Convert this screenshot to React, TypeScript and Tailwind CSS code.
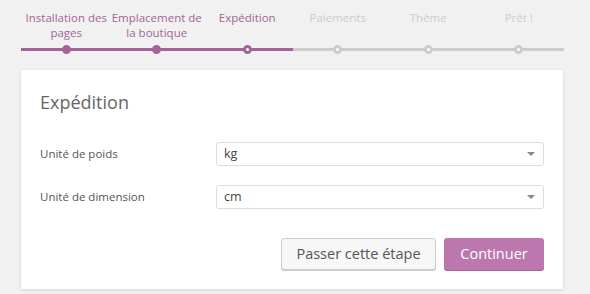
const steps = [
  { lines: ["Installation des", "pages"], state: "done" },
  { lines: ["Emplacement de", "la boutique"], state: "done" },
  { lines: ["Expédition"], state: "active" },
  { lines: ["Paiements"], state: "todo" },
  { lines: ["Thème"], state: "todo" },
  { lines: ["Prêt !"], state: "todo" },
];

function Step({ lines, state }: { lines: string[]; state: string }) {
  const lit = state !== "todo";
  return (
    <li className="flex-1 flex flex-col items-center">
      <div
        className={`h-[41px] pt-[10px] text-center whitespace-nowrap text-[11.5px] leading-[15px] ${
          lit ? "text-[#a46497]" : "text-[#cccccc]"
        }`}
      >
        {lines.map((l) => (
          <div key={l}>{l}</div>
        ))}
      </div>
      <div className="relative w-full h-[16px] flex items-center justify-center">
        <div className={`absolute inset-x-0 top-[7px] h-[3px] ${lit ? "bg-[#a46497]" : "bg-[#cccccc]"}`} />
        <span
          className={`relative w-[9px] h-[9px] rounded-full border-[3px] ${
            state === "done"
              ? "bg-[#a46497] border-[#a46497]"
              : state === "active"
              ? "bg-white border-[#a46497]"
              : "bg-white border-[#cccccc]"
          }`}
        />
      </div>
    </li>
  );
}

function SelectField({ label, value }: { label: string; value: string }) {
  return (
    <div className="flex items-center">
      <label className="w-[176px] text-[11.5px] text-[#555555]">{label}</label>
      <div className="flex-1 h-[24px] flex items-center justify-between pl-[7px] pr-[8px] bg-white border border-[#dddddd] rounded-[3px] text-[12.5px] text-[#444444]">
        <span>{value}</span>
        <span className="w-0 h-0 border-x-[4px] border-x-transparent border-t-[4px] border-t-[#888888]" />
      </div>
    </div>
  );
}

export default function App() {
  return (
    <div
      className="w-[590px] h-[294px] bg-[#f1f1f1] px-[21px] overflow-hidden"
      style={{ fontFamily: '"Open Sans", "Noto Sans", sans-serif' }}
    >
      <ol className="flex w-[543px]">
        {steps.map((s) => (
          <Step key={s.lines[0]} lines={s.lines} state={s.state} />
        ))}
      </ol>
      <div className="mt-[13px] w-[542px] h-[219px] bg-white shadow-[0_1px_3px_rgba(0,0,0,0.13)] pt-[18px] px-[19px] pb-[19px] flex flex-col">
        <h1 className="text-[18px] leading-[28px] text-[#666666]">Expédition</h1>
        <div className="mt-[26px] flex flex-col gap-[19px]">
          <SelectField label="Unité de poids" value="kg" />
          <SelectField label="Unité de dimension" value="cm" />
        </div>
        <div className="mt-auto flex justify-end gap-[8px]">
          <button className="h-[32px] w-[155px] rounded-[3px] border border-[#cccccc] bg-[#f7f7f7] text-[14.5px] text-[#555555] shadow-[0_1px_0_#cccccc]">
            Passer cette étape
          </button>
          <button className="h-[32px] w-[100px] rounded-[3px] bg-[#bb77ae] text-[14.5px] text-white shadow-[0_1px_0_#a36597]">
            Continuer
          </button>
        </div>
      </div>
    </div>
  );
}
